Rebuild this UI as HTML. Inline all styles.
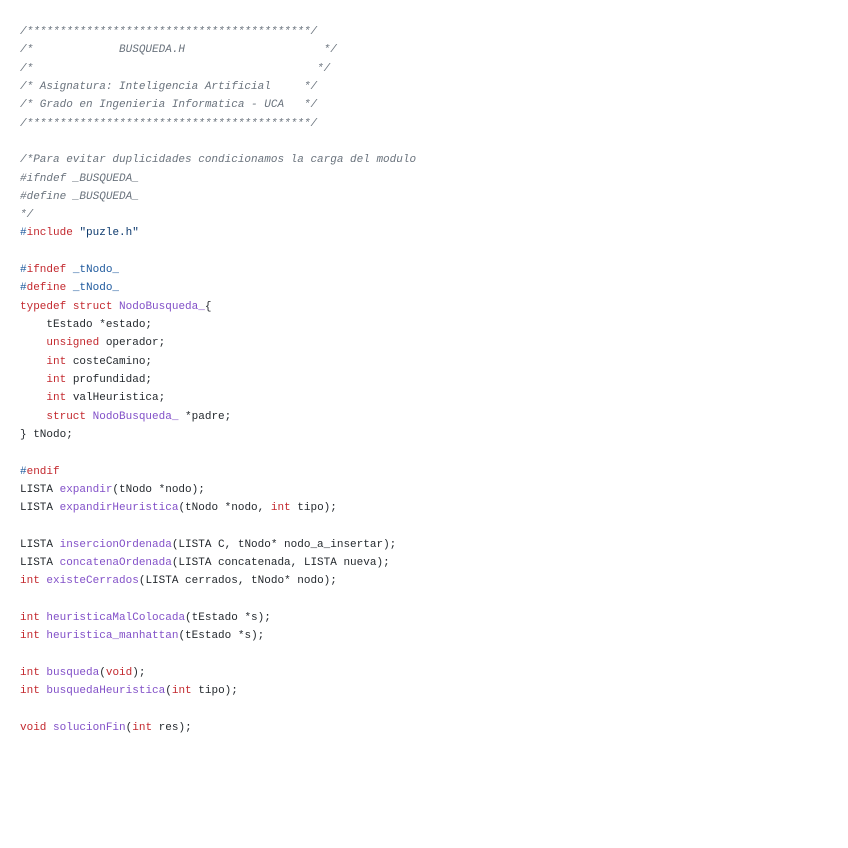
<!DOCTYPE html>
<html><head><meta charset="utf-8"><style>
body{margin:0;background:#fff;width:848px;height:848px;overflow:hidden}
pre{margin:0;position:absolute;left:20px;top:23px;font-family:"Liberation Mono",monospace;font-size:11px;line-height:18.32px;color:#24292e}
.c{color:#6a737d;font-style:italic}
.k{color:#c3282e}
.b{color:#1f5a9e}
.s{color:#0d3a6e}
.f{color:#8250c8}
</style></head><body><pre><span class="c">/*******************************************/
/*             BUSQUEDA.H                     */
/*                                           */
/* Asignatura: Inteligencia Artificial     */
/* Grado en Ingenieria Informatica - UCA   */
/*******************************************/

/*Para evitar duplicidades condicionamos la carga del modulo
#ifndef _BUSQUEDA_
#define _BUSQUEDA_
*/</span>
<span class="b">#</span><span class="k">include</span> <span class="s">"puzle.h"</span>

<span class="b">#</span><span class="k">ifndef</span> <span class="b">_tNodo_</span>
<span class="b">#</span><span class="k">define</span> <span class="b">_tNodo_</span>
<span class="k">typedef</span> <span class="k">struct</span> <span class="f">NodoBusqueda_</span>{
    tEstado *estado;
    <span class="k">unsigned</span> operador;
    <span class="k">int</span> costeCamino;
    <span class="k">int</span> profundidad;
    <span class="k">int</span> valHeuristica;
    <span class="k">struct</span> <span class="f">NodoBusqueda_</span> *padre;
} tNodo;

<span class="b">#</span><span class="k">endif</span>
LISTA <span class="f">expandir</span>(tNodo *nodo);
LISTA <span class="f">expandirHeuristica</span>(tNodo *nodo, <span class="k">int</span> tipo);

LISTA <span class="f">insercionOrdenada</span>(LISTA C, tNodo* nodo_a_insertar);
LISTA <span class="f">concatenaOrdenada</span>(LISTA concatenada, LISTA nueva);
<span class="k">int</span> <span class="f">existeCerrados</span>(LISTA cerrados, tNodo* nodo);

<span class="k">int</span> <span class="f">heuristicaMalColocada</span>(tEstado *s);
<span class="k">int</span> <span class="f">heuristica_manhattan</span>(tEstado *s);

<span class="k">int</span> <span class="f">busqueda</span>(<span class="k">void</span>);
<span class="k">int</span> <span class="f">busquedaHeuristica</span>(<span class="k">int</span> tipo);

<span class="k">void</span> <span class="f">solucionFin</span>(<span class="k">int</span> res);
</pre></body></html>
